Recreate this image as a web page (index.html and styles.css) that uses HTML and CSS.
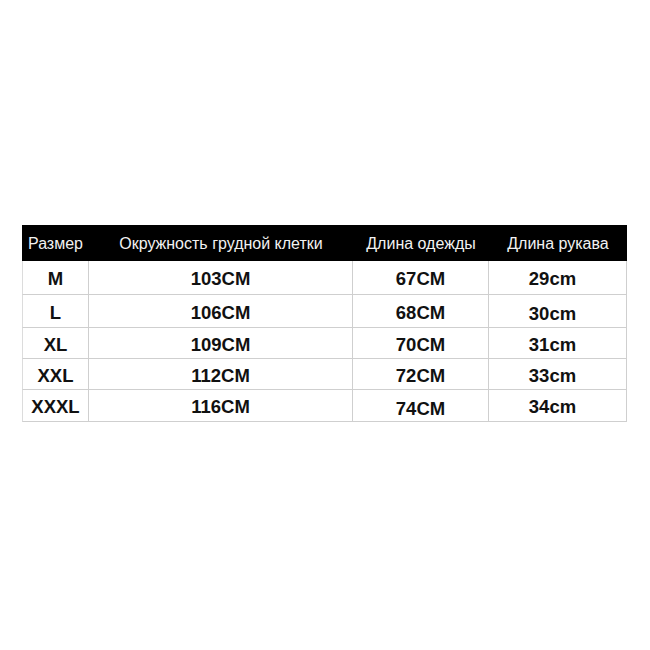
FILE: index.html
```html
<!DOCTYPE html>
<html lang="ru">
<head>
<meta charset="utf-8">
<link rel="stylesheet" href="styles.css">
</head>
<body>
<div class="page">
  <div class="sheet">
    <div class="cell head">Размер</div>
    <div class="cell head">Окружность грудной клетки</div>
    <div class="cell head">Длина одежды</div>
    <div class="cell head">Длина рукава</div>

    <div class="cell first">M</div>
    <div class="cell">103CM</div>
    <div class="cell">67CM</div>
    <div class="cell last">29cm</div>

    <div class="cell first">L</div>
    <div class="cell">106CM</div>
    <div class="cell">68CM</div>
    <div class="cell last low">30cm</div>

    <div class="cell first">XL</div>
    <div class="cell">109CM</div>
    <div class="cell">70CM</div>
    <div class="cell last">31cm</div>

    <div class="cell first">XXL</div>
    <div class="cell">112CM</div>
    <div class="cell">72CM</div>
    <div class="cell last">33cm</div>

    <div class="cell first">XXXL</div>
    <div class="cell">116CM</div>
    <div class="cell low">74CM</div>
    <div class="cell last">34cm</div>
  </div>
</div>
</body>
</html>
```
FILE: styles.css
```css
html, body {
  margin: 0;
  padding: 0;
  background: #ffffff;
}

.page {
  width: 650px;
  height: 650px;
  padding: 225px 0 0 22px;
  box-sizing: border-box;
  font-family: "Liberation Sans", Arial, sans-serif;
}

.sheet {
  display: grid;
  width: 605px;
  grid-template-columns: 67px 264px 136px 138px;
  grid-template-rows: 36px 34px 33px 31px 31px 32px;
}

.cell {
  display: flex;
  align-items: center;
  justify-content: center;
  box-sizing: border-box;
  border-right: 1px solid #cfcfcf;
  border-bottom: 1px solid #cfcfcf;
  font-size: 18.5px;
  font-weight: bold;
  color: #111111;
  padding-top: 3px;
}

.cell.first {
  border-left: 1px solid #dcdcdc;
}

.cell.last {
  padding-right: 10px;
}

.cell.low {
  padding-top: 6px;
}

.cell.head {
  background: #000000;
  color: #f2f2f2;
  font-size: 16px;
  font-weight: normal;
  border: none;
  padding-top: 2px;
}
```
